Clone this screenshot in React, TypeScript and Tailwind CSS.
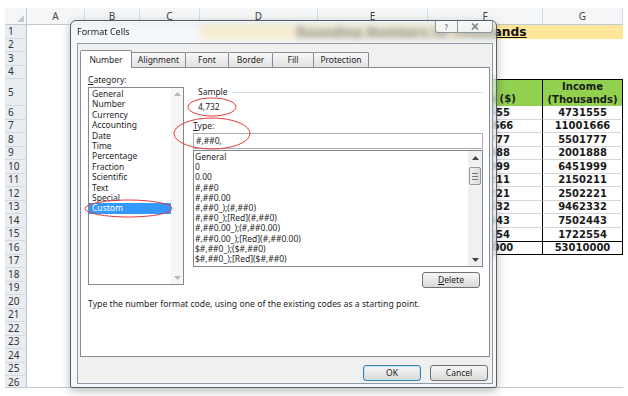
import React from 'react';

const COLS = [
  { name: 'A', w: 'w-[58px]' },
  { name: 'B', w: 'w-[55px]' },
  { name: 'C', w: 'w-[60px]' },
  { name: 'D', w: 'w-[118px]' },
  { name: 'E', w: 'w-[110px]' },
  { name: 'F', w: 'w-[115px]' },
  { name: 'G', w: 'w-[80px]' },
];

const incomes = [
  '4731555',
  '11001666',
  '5501777',
  '2001888',
  '6451999',
  '2150211',
  '2502221',
  '9462332',
  '7502443',
  '1722554',
];

const categories = [
  'General',
  'Number',
  'Currency',
  'Accounting',
  'Date',
  'Time',
  'Percentage',
  'Fraction',
  'Scientific',
  'Text',
  'Special',
  'Custom',
];

const formats = [
  'General',
  '0',
  '0.00',
  '#,##0',
  '#,##0.00',
  '#,##0_);(#,##0)',
  '#,##0_);[Red](#,##0)',
  '#,##0.00_);(#,##0.00)',
  '#,##0.00_);[Red](#,##0.00)',
  '$#,##0_);($#,##0)',
  '$#,##0_);[Red]($#,##0)',
];

const rows = Array.from({ length: 26 }, (_, i) => i + 1);

const cellText = "font-['DejaVu_Sans',sans-serif] font-bold text-[10px] text-[#1a1a1a]";

const SheetRow = ({ n }: { n: number }) => {
  const h = n === 5 ? 'h-[27px]' : 'h-[13.5px]';
  let cells: React.ReactNode = null;

  if (n === 1) {
    cells = (
      <>
        <div className="w-[173px]" />
        <div className="w-[423px] bg-[#ffe699] flex items-center justify-center font-['DejaVu_Sans',sans-serif] font-bold text-[12.3px] underline text-[#111]">
          Rounding Numbers to Thousands
        </div>
      </>
    );
  } else if (n === 5) {
    cells = (
      <>
        <div className="w-[401px]" />
        <div className={`w-[115px] bg-[#92d050] border-l border-r border-t border-black flex items-end justify-center pb-[1px] leading-[13px] ${cellText}`}>
          Income ($)
        </div>
        <div className={`w-[80px] bg-[#92d050] border-r border-t border-black flex flex-col items-center justify-center leading-[13px] ${cellText}`}>
          <span>Income</span>
          <span>(Thousands)</span>
        </div>
      </>
    );
  } else if (n >= 6 && n <= 15) {
    const v = incomes[n - 6];
    const bb = n < 15 ? 'border-b border-b-[#d6d6d6]' : '';
    cells = (
      <>
        <div className="w-[401px]" />
        <div className={`w-[115px] border-l border-r border-black ${bb} flex items-center justify-center ${cellText}`}>
          {v}
        </div>
        <div className={`w-[80px] border-r border-black ${bb} flex items-center justify-center ${cellText}`}>
          {v}
        </div>
      </>
    );
  } else if (n === 16) {
    cells = (
      <>
        <div className="w-[401px]" />
        <div className={`w-[115px] border-l border-r border-t-[1.5px] border-b border-black flex items-center justify-center ${cellText}`}>
          53010000
        </div>
        <div className={`w-[80px] border-r border-t-[1.5px] border-b border-black flex items-center justify-center ${cellText}`}>
          53010000
        </div>
      </>
    );
  }

  return (
    <div className={`${h} flex shrink-0`}>
      <div className="w-[22px] shrink-0 bg-[#e9edf1] border-r border-b border-r-[#b9c3cd] border-b-[#d3d9e0] flex items-center pl-[3px] text-[10px] text-[#333] font-['Noto_Sans',sans-serif]">
        {n}
      </div>
      {cells}
    </div>
  );
};

const UpArrow = ({ color }: { color: string }) => (
  <svg width="7" height="4" viewBox="0 0 7 4">
    <path d="M0 4 L3.5 0 L7 4 Z" fill={color} />
  </svg>
);

const DownArrow = ({ color }: { color: string }) => (
  <svg width="7" height="4" viewBox="0 0 7 4">
    <path d="M0 0 L3.5 4 L7 0 Z" fill={color} />
  </svg>
);

const Tab = ({ label, w, active, first }: { label: string; w: string; active?: boolean; first?: boolean }) => (
  <div
    className={`${w} ${
      active
        ? 'h-[18px] -mb-px -ml-[2px] bg-white relative z-10'
        : `h-[15px] bg-linear-to-b from-[#f7f7f7] to-[#e2e2e2] ${first ? '' : '-ml-px'}`
    } border border-b-0 border-[#898c95] rounded-t-[2px] flex items-center justify-center text-[8.5px] leading-[10px] text-[#1e1e1e]`}
  >
    {label}
  </div>
);

const Button = ({ children, primary }: { children: React.ReactNode; primary?: boolean }) => (
  <div
    className={`w-[58px] h-[16px] rounded-[3px] border ${
      primary ? 'border-[#3c7fb1] shadow-[inset_0_0_0_1px_#bfe3f7]' : 'border-[#707070]'
    } bg-linear-to-b from-[#f4f4f4] via-[#e9e9e9] to-[#d9d9d9] flex items-center justify-center text-[8.5px] text-[#1e1e1e]`}
  >
    {children}
  </div>
);

const Dialog = () => (
  <div className="absolute left-[70px] top-[20px] w-[427px] h-[368px] rounded-t-[6px] rounded-b-[2px] border border-[#56606c] bg-[rgba(236,242,247,0.55)] backdrop-blur-[3px] shadow-[0_3px_10px_rgba(0,0,0,0.28)] flex flex-col pl-[6px] pr-[3px] pb-[3px] font-['Noto_Sans',sans-serif] text-[#1e1e1e]">
    {/* title bar */}
    <div className="h-[22px] shrink-0 flex items-start">
      <div className="pt-[6px] text-[9px] leading-[10px] text-[#1a1a1a]">Format Cells</div>
      <div className="ml-auto flex">
        <div className="w-[23px] h-[12px] border border-t-0 border-[#8d97a2] rounded-bl-[3px] bg-[rgba(248,250,252,0.85)] flex items-center justify-center text-[8px] leading-[8px] font-bold text-[#8a9098]">
          ?
        </div>
        <div className="w-[35px] h-[12px] border border-t-0 border-l-0 border-[#8d97a2] rounded-br-[3px] bg-[rgba(248,250,252,0.85)] flex items-center justify-center">
          <svg width="8" height="7" viewBox="0 0 8 7">
            <path d="M1 0.5 L7 6.5 M7 0.5 L1 6.5" stroke="#7f868e" strokeWidth="1.7" />
          </svg>
        </div>
      </div>
    </div>

    {/* client */}
    <div className="flex-1 border border-[#8f9aa5] bg-[#f0f0f0] flex flex-col">
      <div className="h-[23px] shrink-0 flex items-end pl-[4px]">
        <Tab label="Number" w="w-[52px]" active />
        <Tab label="Alignment" w="w-[55px]" />
        <Tab label="Font" w="w-[44px]" />
        <Tab label="Border" w="w-[45px]" />
        <Tab label="Fill" w="w-[42px]" />
        <Tab label="Protection" w="w-[56px]" />
      </div>

      <div className="relative mx-[2px] h-[290px] shrink-0 border border-[#898c95] bg-white text-[8.5px] leading-[10px]">
        <div className="flex items-start pl-[7px]">
          {/* category */}
          <div className="flex flex-col pt-[7px]">
            <div className="h-[10px]">
              <span className="underline">C</span>ategory:
            </div>
            <div className="mt-[2px] w-[96px] h-[198px] border border-[#828790] flex">
              <div className="flex-1 pt-[1px] leading-[10.4px]">
                {categories.map((c) => (
                  <div
                    key={c}
                    className={`h-[10.4px] pl-[3px] ${c === 'Custom' ? 'bg-[#3399ff] text-white' : ''}`}
                  >
                    {c}
                  </div>
                ))}
              </div>
              <div className="w-[12px] bg-[#f6f6f6] flex flex-col justify-between items-center py-[4px]">
                <UpArrow color="#b8b8b8" />
                <DownArrow color="#b8b8b8" />
              </div>
            </div>
          </div>

          {/* sample + type */}
          <div className="ml-[9px] mt-[19px] w-[291px] flex flex-col">
            <div className="h-[10px] flex items-center">
              <span className="pl-[5px]">Sample</span>
              <div className="flex-1 h-px bg-[#d5dfe5] ml-[4px]" />
            </div>
            <div className="mt-[5px] h-[10px] pl-[5px]">4,732</div>
            <div className="mt-[9px] h-[10px]">
              <span className="underline">T</span>ype:
            </div>
            <div className="mt-[2px] w-[290px] h-[16px] border border-[#abadb3] flex items-center pl-[2px]">
              #,##0,
            </div>
            <div className="mt-[1px] w-[290px] h-[117px] border border-[#828790] flex">
              <div className="flex-1 pt-[1px] pl-[1px] leading-[10.2px]">
                {formats.map((f) => (
                  <div key={f} className="h-[10.2px]">
                    {f}
                  </div>
                ))}
              </div>
              <div className="w-[14px] bg-[#f0f0f0] flex flex-col items-center">
                <div className="h-[13px] flex items-center justify-center">
                  <UpArrow color="#404040" />
                </div>
                <div className="mt-[3px] w-[12px] h-[18px] rounded-[2px] border border-[#979797] bg-linear-to-r from-[#f2f2f2] to-[#dcdcdc] flex flex-col items-center justify-center gap-[2px]">
                  <div className="w-[6px] h-px bg-[#777]" />
                  <div className="w-[6px] h-px bg-[#777]" />
                  <div className="w-[6px] h-px bg-[#777]" />
                </div>
                <div className="mt-auto h-[13px] flex items-center justify-center">
                  <DownArrow color="#404040" />
                </div>
              </div>
            </div>
            <div className="mt-[5px] self-end mr-[4px]">
              <Button>
                <span className="underline">D</span>elete
              </Button>
            </div>
          </div>
        </div>

        <div className="mt-[11px] pl-[7px] h-[10px] text-[8.7px]">
          Type the number format code, using one of the existing codes as a starting point.
        </div>

        <svg className="absolute inset-0 pointer-events-none" width="408" height="288">
          <ellipse cx="131" cy="39" rx="24" ry="9" fill="none" stroke="#e23b3b" strokeWidth="1" />
          <ellipse cx="131" cy="65.5" rx="38" ry="15.5" fill="none" stroke="#e23b3b" strokeWidth="1" />
          <ellipse cx="47.5" cy="140.5" rx="43.5" ry="8.5" fill="none" stroke="#e23b3b" strokeWidth="1" />
        </svg>
      </div>

      <div className="mt-[8px] flex justify-end gap-[9px] pr-[4px]">
        <Button primary>OK</Button>
        <Button>Cancel</Button>
      </div>
    </div>
  </div>
);

export default function App() {
  return (
    <div className="relative w-[628px] h-[396px] bg-white overflow-hidden">
      <div className="mt-[8px] ml-[5px] w-[618px] h-[380px] overflow-hidden border-b border-[#c3c9d0] flex flex-col">
        {/* column headers */}
        <div className="h-[17px] shrink-0 flex bg-[#f4f6f8] border-b border-[#c2c9d1] font-['Noto_Sans',sans-serif] text-[10px] text-[#444]">
          <div className="w-[22px] border-r border-[#c2c9d1] flex items-end justify-end pr-[2px] pb-[2px]">
            <svg width="7" height="7" viewBox="0 0 7 7">
              <path d="M7 0 L7 7 L0 7 Z" fill="#c4c9cf" />
            </svg>
          </div>
          {COLS.map((c) => (
            <div key={c.name} className={`${c.w} border-r border-[#d6dbe1] flex items-center justify-center`}>
              {c.name}
            </div>
          ))}
        </div>
        {rows.map((n) => (
          <SheetRow key={n} n={n} />
        ))}
      </div>
      <Dialog />
    </div>
  );
}
